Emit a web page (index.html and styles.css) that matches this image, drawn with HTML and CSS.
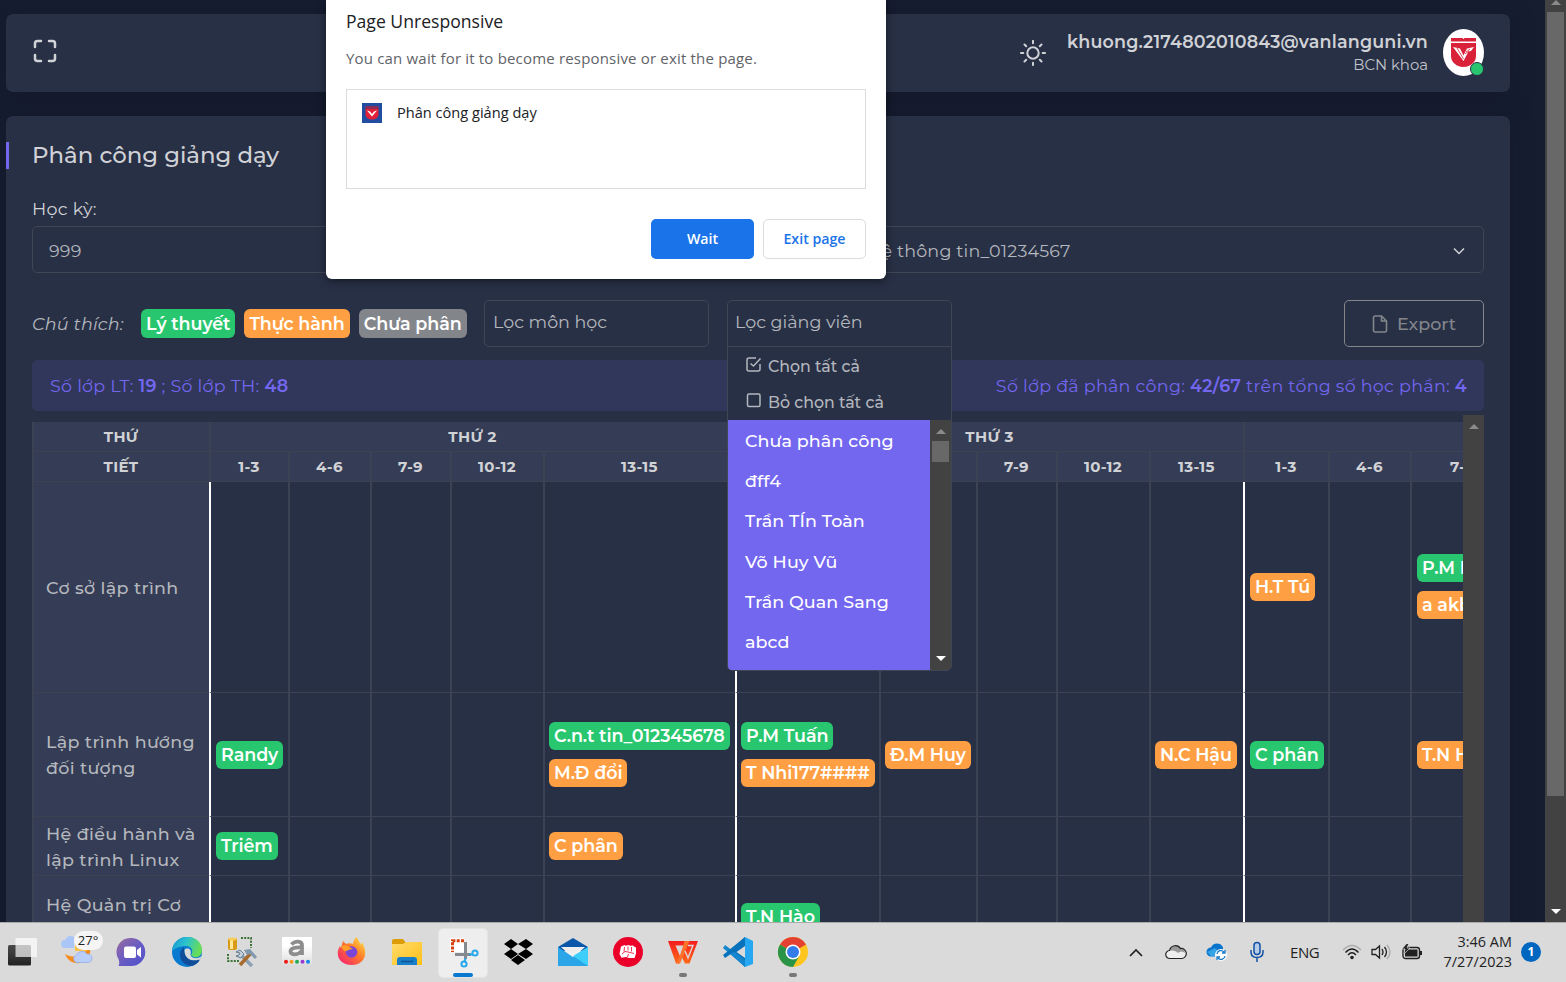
FILE: index.html
```html
<!DOCTYPE html>
<html lang="vi">
<head>
<meta charset="utf-8">
<title>Phân công giảng dạy</title>
<link rel="stylesheet" href="styles.css">
</head>
<body>
<div class="screen">
  <div class="viewport">
    <main class="page">
      <header class="navbar">
        <svg class="i-full" width="24" height="24" viewBox="0 0 24 24"><path d="M8 2H4.500A2.500 2.500 0 0 0 2 4.500V8M16 2h3.500A2.500 2.500 0 0 1 22 4.500V8M8 22H4.500A2.500 2.500 0 0 1 2 19.500V16M16 22h3.500a2.500 2.500 0 0 0 2.500-2.500V16"/></svg>
        <div class="user">
          <svg class="i-sun" width="26" height="26" viewBox="0 0 26 26"><circle cx="13" cy="13" r="5.700"/><path d="M13 .9v2.400M13 22.700v2.400M.9 13h2.400M22.700 13h2.400M4.500 4.500l1.700 1.700M19.800 19.800l1.700 1.700M4.500 21.500l1.700-1.700M19.800 6.200l1.700-1.700"/></svg>
          <div class="who"><b>khuong.2174802010843@vanlanguni.vn</b><span>BCN khoa</span></div>
          <div class="avatar">
            <svg width="41" height="47" viewBox="0 0 41 47"><ellipse cx="20.500" cy="23.500" rx="20.500" ry="23.500" fill="#fff"/><path d="M8 9h11.500l1 1.200 1-1.200H33v3.500H8zM8 14h25v13c0 6-5 10.500-12.500 11C13 37.500 8 33 8 27z" fill="#d9223a"/><path d="M10 18l7 1.500 3.500 7L24 19.500l7-1.500-3 4-2.500.5L20.500 32z" fill="#fff"/><path d="M14 19l6.500 11M23 23l4-3M22 25l4-3" stroke="#d9223a" stroke-width=".8"/></svg>
            <i class="online"></i>
          </div>
        </div>
      </header>

      <section class="card">
        <h1>Phân công giảng dạy</h1>
        <label class="lbl">Học kỳ:</label>
        <div class="selects">
          <div class="select">999</div>
          <div class="select major"><span>Hệ thông tin_01234567</span><svg width="12" height="8" viewBox="0 0 12 8"><path d="M1 1.500l5 5 5-5"/></svg></div>
        </div>
        <div class="tools">
          <em>Chú thích:</em>
          <span class="badge green">Lý thuyết</span><span class="badge orange">Thực hành</span><span class="badge gray">Chưa phân</span>
          <div class="filter first">Lọc môn học</div>
          <div class="filter lecturer"><span>Lọc giảng viên</span>
            <div class="menu">
              <div class="act"><svg width="17" height="17" viewBox="0 0 17 17"><path d="M15 8v5a2 2 0 0 1-2 2H4a2 2 0 0 1-2-2V4a2 2 0 0 1 2-2h7M5.500 7.500L8.500 10l7-7.500"/></svg><span>Chọn tất cả</span></div>
              <div class="act"><svg width="17" height="17" viewBox="0 0 17 17"><rect x="2.500" y="2" width="12.500" height="12.500" rx="1.500"/></svg><span>Bỏ chọn tất cả</span></div>
              <div class="list">
                <ul><li>Chưa phân công</li><li>đff4</li><li>Trần TÍn Toàn</li><li>Võ Huy Vũ</li><li>Trần Quan Sang</li><li>abcd</li></ul>
                <div class="sbar"><i class="up"></i><i class="thumb"></i><i class="down"></i></div>
              </div>
            </div>
          </div>
          <button class="export"><svg width="16" height="18" viewBox="0 0 16 18"><path d="M9.500 1H3.200A1.700 1.700 0 0 0 1.500 2.700v12.600A1.700 1.700 0 0 0 3.200 17h9.600a1.700 1.700 0 0 0 1.700-1.700V6zM9.500 1v5h5"/></svg><span>Export</span></button>
        </div>
        <div class="alert"><span>Số lớp LT: <b>19</b> ; Số lớp TH: <b>48</b></span><span>Số lớp đã phân công: <b>42/67</b> trên tổng số học phần: <b>4</b></span></div>
        <div class="sheet">
          <div class="clip">
            <div class="grid">
              <div class="th">THỨ</div><div class="th five">THỨ 2</div><div class="th five">THỨ 3</div><div class="th three"></div>
              <div class="th">TIẾT</div><div class="th">1-3</div><div class="th">4-6</div><div class="th">7-9</div><div class="th">10-12</div><div class="th">13-15</div><div class="th">1-3</div><div class="th">4-6</div><div class="th">7-9</div><div class="th">10-12</div><div class="th">13-15</div><div class="th">1-3</div><div class="th">4-6</div><div class="th">7-9</div>

              <div class="name">Cơ sở lập trình</div><div class="day"></div><div></div><div></div><div></div><div></div><div class="day"></div><div></div><div></div><div></div><div></div><div class="day wide"><span class="badge orange">H.T Tú</span></div><div></div><div class="wide pair"><span class="badge green">P.M Hiền</span><span class="badge orange">a akb</span></div>

              <div class="name">Lập trình hướng<br>đối tượng</div><div class="day wide"><span class="badge green">Randy</span></div><div></div><div></div><div></div><div><span class="badge green">C.n.t tin_012345678</span><span class="badge orange">M.Đ đổi</span></div><div class="day"><span class="badge green">P.M Tuấn</span><span class="badge orange">T Nhi177####</span></div><div><span class="badge orange">Đ.M Huy</span></div><div></div><div></div><div><span class="badge orange">N.C Hậu</span></div><div class="day wide"><span class="badge green">C phân</span></div><div></div><div class="wide"><span class="badge orange">T.N Hà</span></div>

              <div class="name">Hệ điều hành và<br>lập trình Linux</div><div class="day wide"><span class="badge green">Triêm</span></div><div></div><div></div><div></div><div><span class="badge orange">C phân</span></div><div class="day"></div><div></div><div></div><div></div><div></div><div class="day"></div><div></div><div></div>

              <div class="name">Hệ Quản trị Cơ<br>&nbsp;</div><div class="day"></div><div></div><div></div><div></div><div></div><div class="day"><span class="badge green">T.N Hào</span></div><div></div><div></div><div></div><div></div><div class="day"></div><div></div><div></div>
            </div>
          </div>
          <div class="sbar tall"><i class="up"></i></div>
        </div>
      </section>
    </main>
    <div class="sbar main"><i class="up"></i><i class="thumb"></i><i class="down"></i></div>
  </div>

  <div class="dialog">
    <h2>Page Unresponsive</h2>
    <p>You can wait for it to become responsive or exit the page.</p>
    <div class="pages"><svg width="20" height="20" viewBox="0 0 20 20"><rect width="20" height="20" fill="#204da0"/><path d="M3.500 3h13v3h-13z" fill="#8c2d59"/><path d="M3.500 6h13v5.500c0 3-3 5-6.500 5s-6.500-2-6.500-5z" fill="#df2039"/><path d="M5 7.500l3 1 2 2.500 2-2.500 3-1-5 6z" fill="#fff"/></svg><span>Phân công giảng dạy</span></div>
    <div class="btns"><button class="wait">Wait</button><button class="exit">Exit page</button></div>
  </div>

  <footer class="taskbar">
    <div class="apps">
      <div><svg width="32" height="32" viewBox="0 0 32 32"><defs><linearGradient id="tv" x2="0" y2="1"><stop stop-color="#4a4a4a"/><stop offset="1" stop-color="#222"/></linearGradient></defs><rect x="2" y="9" width="23" height="20.500" rx="1.500" fill="url(#tv)"/><path d="M9.500 2H31v19H9.500z" fill="#fff" opacity=".68"/></svg></div>
      <div class="weather"><svg width="34" height="34" viewBox="0 0 34 34"><path d="M26 6c4 13-9 20-21 13 5 13 22 12 25-1 1-5-1-9-4-12z" fill="#f68b1f"/><path d="M15 8h12v8H15z" fill="#f8c24f"/><path d="M5 13a4 4 0 0 1 0-8 6 6 0 0 1 9-3v11z" fill="#a9c6f7"/><path d="M16 27.500a4 4 0 0 1 .5-7.500 6 6 0 0 1 10.500-1 4.300 4.300 0 1 1 1.500 8.500z" fill="#b9cef8" stroke="#8fabe9" stroke-width=".7"/></svg><span>27°</span></div>
      <div><svg width="32" height="32" viewBox="0 0 32 32"><defs><linearGradient id="ch" x2="1" y2="1"><stop stop-color="#9a6a9f"/><stop offset=".5" stop-color="#6a5cc2"/><stop offset="1" stop-color="#4d50cd"/></linearGradient></defs><path d="M16 2a14 14 0 1 1-1.500 28H2.500c1-2 1-4 0-7A14 14 0 0 1 16 2z" fill="url(#ch)"/><rect x="8" y="10.500" width="12" height="11.500" rx="2" fill="#fff"/><path d="M21 14l4-3v10.500l-4-3z" fill="#fff"/></svg></div>
      <div><svg width="32" height="32" viewBox="0 0 32 32"><defs><linearGradient id="ed" x2="1" y2=".3"><stop stop-color="#1593d5"/><stop offset=".5" stop-color="#2cc2ce"/><stop offset="1" stop-color="#68dd58"/></linearGradient></defs><circle cx="16" cy="16" r="15" fill="#087bd0"/><path d="M1 15C2-4 31-3 31 14c0 8-8 9-11 5 3-5 0-9-5-9-7 0-12 3-14 5z" fill="url(#ed)"/><path d="M13 11c-7 5-5 18 8 19 3-1 6-3 8-6-6 4-16 0-16-13z" fill="#124d99"/><path d="M13.500 14c2-3 8-1 6 4 0 4 6 6 11 2l-1.500 4c-7 3-16-1-15.500-10z" fill="#dadada"/><path d="M13.300 16c0 7 7 10 15.200 7.500-1 2-2 3-3.500 4-7 1-13-4-11.700-11.500z" fill="#124d99"/></svg></div>
      <div><svg width="32" height="32" viewBox="0 0 32 32"><path d="M15 2h10v10M2 18v7h11" fill="none" stroke="#3d7339" stroke-width="2" stroke-dasharray="2 1.200"/><rect x="2" y="2" width="9" height="12" rx="2" fill="#d79b18"/><path d="M4 3h3v10H4z" fill="#ffe894"/><ellipse cx="6.500" cy="3" rx="4" ry="1.500" fill="#f7cf54"/><path d="M14 18l12 12" stroke="#8c9fb3" stroke-width="3.500"/><path d="M25 17L14 29" stroke="#a76b2d" stroke-width="3.500"/><path d="M18 14l6-1 7 8-2 2-5-5-3 1z" fill="#8199ae"/><path d="M10 16l4-2 4 4-3 4-5-2 3-1 1-2z" fill="#c5d2df" stroke="#647b8e"/></svg></div>
      <div><svg width="32" height="32" viewBox="0 0 32 32"><defs><linearGradient id="am" x2="0" y2="1"><stop offset=".3" stop-color="#fff"/><stop offset="1" stop-color="#ddd"/></linearGradient></defs><path d="M1 1h30v28H1z" fill="url(#am)"/><path d="M10.500 8.500C14 4.500 21 4.500 21 9.500V19m0-7.500c-8-.5-11.500 1-11.500 4 0 4 8 4 11.500-1" fill="none" stroke="#8d8d8d" stroke-width="3.800"/><circle cx="5" cy="25.700" r="2" fill="#ef1616"/><circle cx="10.500" cy="25.700" r="2" fill="#f39b1f"/><circle cx="16" cy="25.700" r="2" fill="#24a956"/><circle cx="21.500" cy="25.700" r="2" fill="#9839d1"/><circle cx="27" cy="25.700" r="2" fill="#1287e5"/></svg></div>
      <div><svg width="32" height="32" viewBox="0 0 32 32"><defs><linearGradient id="fx" x1="1" x2="0" y2="1"><stop stop-color="#fff04a"/><stop offset=".45" stop-color="#ff7a28"/><stop offset="1" stop-color="#f4157c"/></linearGradient></defs><path d="M7 5l3 3c2-1 5-1 7 0 0-3 2-6 4-7 1 4 3 5 4 8l1-3c8 14 0 23-10 23C2 29-1 17 4 10l1 2z" fill="url(#fx)"/><circle cx="15.500" cy="16" r="5.800" fill="#7b45d8"/><path d="M5 10c5-2 8 1 12 3-4 0-6 3-9 2z" fill="#ff9d26"/></svg></div>
      <div><svg width="32" height="32" viewBox="0 0 32 32"><defs><linearGradient id="fo" x2="1" y2="1"><stop stop-color="#ffdc6c"/><stop offset="1" stop-color="#ffbf18"/></linearGradient></defs><path d="M1 5q0-2 2-2h9l3 4v4H1z" fill="#dc9c05"/><path d="M1 8h11l3-2h16v23H1z" fill="url(#fo)"/><path d="M6 29v-5a3 3 0 0 1 3-3h14a3 3 0 0 1 3 3v5z" fill="#177fc9"/><path d="M10 25.500h12" stroke="#105393" stroke-width="1.500"/></svg></div>
      <div class="active"><svg width="32" height="32" viewBox="0 0 32 32"><path d="M3 2h14v14H3z" fill="#fff"/><path d="M17 4.800H5.500V16" fill="none" stroke="#d4420e" stroke-width="3" stroke-dasharray="3 1.300"/><path d="M18.500 6v17M8 18.500h16" stroke="#858a90" stroke-width="3"/><circle cx="28" cy="17" r="2.600" fill="none" stroke="#27a9eb" stroke-width="2"/><circle cx="17" cy="28" r="2.600" fill="none" stroke="#27a9eb" stroke-width="2"/><path d="M22 18.500h4M18.500 22l-1 4" stroke="#27a9eb" stroke-width="2"/></svg><i></i></div>
      <div><svg width="32" height="32" viewBox="0 0 32 32"><path d="M9 3l7 5-7 5-7-5zM24 3l7 5-7 5-8-5zM9 13l7 5-7 5-7-5zM24 13l7 5-7 5-8-5zM16 19l7 5-7 5-7-5z"/></svg></div>
      <div><svg width="32" height="32" viewBox="0 0 32 32"><path d="M1 11L16 2l15 9v4H1z" fill="#0b57aa"/><path d="M4 11h24L16 22z" fill="#f4f4f4"/><path d="M1 11l15 10 15-10v19H1z" fill="#2aa6e8"/><path d="M31 11v19L16 20z" fill="#3dcefa"/><path d="M5 11h22l-11 9z" fill="#eee"/></svg></div>
      <div><svg width="32" height="32" viewBox="0 0 32 32"><circle cx="16" cy="16" r="15" fill="#eb0029"/><path d="M9 10.500l3.500-1.500 1 .7L17 9l1 .8 3-.3 1 1 2 1v6l-1.500 4.500H17l-3-1-4.500.8L7.500 18z" fill="#fff"/><path d="M12.500 11l-.5 4.500M16 10.500v4M19.500 11v4.500M10 18l3-2.500 3 .5 6 1.500M16.500 18l-1 3" stroke="#eb0029" stroke-width=".8" fill="none"/></svg></div>
      <div class="open"><svg width="32" height="32" viewBox="0 0 32 32"><defs><linearGradient id="wp" x2="0" y2="1"><stop stop-color="#f51d20"/><stop offset="1" stop-color="#ff6a18"/></linearGradient></defs><path d="M1 5h18v4.500H8.500L13 20l5.500-15H31l-8.500 22.500h-4.500l-3.500-7-2.500 7H9z" fill="url(#wp)"/><path d="M17.500 5h5L13 27.500H9l4-7.500z" fill="#ff722c"/><path d="M18 15l3 7 5-12.500h-5" fill="none" stroke="#dadada" stroke-width="1.400"/></svg><i></i></div>
      <div><svg width="32" height="32" viewBox="0 0 32 32"><path d="M23 1l8 4v23l-8 3z" fill="#25a8f1"/><path d="M23 1L8 16l15 15V22L14.500 16 23 10z" fill="#0871b9"/><path d="M3 9l20 15v7L1 12z" fill="#1687ce"/><path d="M3 22L23 8V1L1 19z" fill="#0873bc"/></svg></div>
      <div class="open"><svg width="32" height="32" viewBox="0 0 32 32"><circle cx="16" cy="16" r="15" fill="#ffc51f"/><path d="M16 16L3 8.500a15 15 0 0 1 26 0z" fill="#e54133"/><path d="M16 16L3 8.500A15 15 0 0 0 16 31l6.500-11.500z" fill="#299447"/><circle cx="16" cy="16" r="7.500" fill="#fff"/><circle cx="16" cy="16" r="6" fill="#337ce9"/></svg><i></i></div>
    </div>
    <div class="tray">
      <svg class="up-i" width="14" height="9" viewBox="0 0 14 9"><path d="M1 8l6-6 6 6" fill="none" stroke="#222" stroke-width="1.700"/></svg>
      <svg class="cloud" width="22" height="16" viewBox="0 0 22 16"><path d="M5 14.500a4 4 0 0 1-.5-8A6 6 0 0 1 15.500 4.500a5 5 0 0 1 1.500 10z" fill="#eee"/><path d="M4 7C6 1 14 0 16 5c2 0 4 1.500 4 4-3-2-5-2-7 0-3-2.500-6-3-9-2z" fill="#999"/><path d="M5 14.500a4 4 0 0 1-.5-8A6 6 0 0 1 15.500 4.500a5 5 0 0 1 1.500 10z" fill="none" stroke="#222" stroke-width="1.200"/></svg>
      <svg class="one" width="22" height="20" viewBox="0 0 22 20"><path d="M5 14.500A4.500 4.500 0 0 1 5 5.500a6.500 6.500 0 0 1 12 0v9z" fill="#0874cb"/><path d="M1 10L9 6l9 8H5z" fill="#35a4e7"/><circle cx="15" cy="13" r="6" fill="#fff"/><path d="M11 12a4 4 0 0 1 7-2M19 8v3h-3M19 14a4 4 0 0 1-7 2M11 18v-3h3" fill="none" stroke="#1478c9" stroke-width="1.300"/></svg>
      <svg class="mic" width="14" height="22" viewBox="0 0 14 22"><rect x="4" y="1.500" width="6" height="12" rx="3" fill="#b6cce9"/><g fill="none" stroke="#1451a5" stroke-width="1.500"><rect x="4" y="1.500" width="6" height="12" rx="3"/><path d="M1 9v2q0 5.500 6 5.500t6-5.500V9M7 16.500V21"/></g></svg>
      <span class="eng">ENG</span>
      <svg class="wifi" width="20" height="16" viewBox="0 0 20 16"><g fill="none" stroke-width="1.400"><path d="M1 6q9-9 18 0" stroke="#aaa"/><path d="M3.500 8.500q6.500-7 13 0M6 11q4-4.500 8 0" stroke="#222"/></g><circle cx="10" cy="13.500" r="1.800" fill="#222"/></svg>
      <svg class="vol" width="20" height="16" viewBox="0 0 20 16"><g fill="none" stroke="#222" stroke-width="1.300"><path d="M1 5.500h3.500L8.500 2v12l-4-3.500H1zM11 5q2 3 0 6M13.500 3q4 5 0 10"/><path d="M16 1q6 7 0 14" stroke="#aaa"/></g></svg>
      <svg class="bat" width="20" height="17" viewBox="0 0 20 17"><rect x="1" y="3.500" width="16.500" height="11" rx="2.500" fill="none" stroke="#222" stroke-width="1.400"/><path d="M3 5.500h12.500v7H3zM18 7h2v4h-2z" fill="#222"/><path d="M5-1L0 5h3l-1 5 6-6H5l2-5z" fill="#222" stroke="#dadada" stroke-width=".7"/></svg>
      <div class="clock"><span>3:46 AM</span><span>7/27/2023</span></div>
      <b class="notice">1</b>
    </div>
  </footer>
</div>
</body>
</html>
```
FILE: styles.css
```css
*{box-sizing:border-box}
body{margin:0;overflow:hidden;background:#161d31;color:#b4b7bd;font:500 17.5px Montserrat,Inter,"Noto Sans",sans-serif}
svg{display:block;flex:none}
button{font:inherit;margin:0;padding:0;background:none}
.screen{position:relative;width:1566px;height:982px;display:flex;flex-direction:column;overflow:hidden}
.viewport{height:922px;display:flex;overflow:hidden}
.page{width:1545px;padding:14px 35px 0 6px}
.navbar{height:78px;border-radius:7px;background:#283046;display:flex;justify-content:space-between;padding:15px 26px 0 27px;box-shadow:0 4px 24px rgba(20,20,30,.35)}
.navbar .i-full{margin-top:10px;fill:none;stroke:#d0d2d6;stroke-width:2.5;stroke-linecap:round}
.user{display:flex}
.i-sun{margin:11px 21px 0 0;fill:none;stroke:#d0d2d6;stroke-width:2;stroke-linecap:round}
.who{display:flex;flex-direction:column;align-items:flex-end;margin-right:15px;color:#d0d2d6;white-space:nowrap}
.who b{font-weight:600;font-size:17.5px;line-height:25px;letter-spacing:.17px}
.who span{font-weight:400;font-size:14.9px;line-height:22px;color:#c0c3c8}
.avatar{position:relative;width:41px;height:47px}
.online{position:absolute;right:0;bottom:0;width:14px;height:14px;border-radius:50%;background:#28c76f;border:1px solid #283046}
.card{margin-top:24px;height:900px;background:#283046;border-radius:7px;padding:26px 26px 0;box-shadow:0 4px 24px rgba(20,20,30,.35)}
h1{margin:0 0 0 -26px;padding-left:23px;border-left:3px solid #7367f0;height:27px;font-size:22.85px;line-height:27px;font-weight:500;color:#d0d2d6}
.lbl{display:block;margin-top:27px;height:26px;font-size:17.5px;letter-spacing:.25px;line-height:26px;font-weight:400;color:#d0d2d6}
.selects{display:grid;grid-template-columns:1fr 1fr;gap:26px;margin-top:4px}
.select{height:47px;border:1px solid #404656;border-radius:5px;padding:2px 16px 0;display:flex;align-items:center;justify-content:space-between;font-size:17.5px;letter-spacing:.18px;font-weight:400;line-height:26px}
.select.major{padding-left:95px;padding-right:18px}
.select svg{fill:none;stroke:#d0d2d6;stroke-width:1.5}
.tools{display:flex;margin-top:27px;height:47px;align-items:center;position:relative;z-index:2}
.tools em{font-weight:400;letter-spacing:.2px;width:109px}
.badge{display:block;height:28px;line-height:28px;border-radius:6px;padding:0 5px;color:#fff;font-weight:600;font-size:17.5px;letter-spacing:-.06px;white-space:nowrap;width:max-content}
.tools .badge{height:29px;line-height:30px;margin-right:9px}
.green{background:#28c76f}.orange{background:#ff9f43}.gray{background:#82868b}
.filter{width:225px;height:47px;border:1px solid #404656;border-radius:5px;padding:0 8px;line-height:42px;font-weight:400}
.filter.first{margin-left:auto;margin-right:18px}
.lecturer{position:relative;border-radius:5px 5px 0 0;margin-right:392px;padding-left:7px}
.menu{position:absolute;left:-1px;top:45px;width:225px;background:#283046;border:1px solid #404656;border-radius:0 0 5px 5px;overflow:hidden;font-weight:500;font-size:15.8px}
.act{height:36px;display:flex;align-items:center;gap:6px;padding-left:17px;line-height:36px}
.act:first-child{height:37px;padding-top:3px}
.act+.act{padding-top:2px}
.act svg{margin-top:-5px;fill:none;stroke:#b4b7bd;stroke-width:1.5}
.list{display:flex;height:250px;background:#424242}
.list ul{margin:0;padding:1px 0 0;list-style:none;width:202px;background:#7367f0;color:#fff;font-size:17.5px}
.list li{height:40.2px;line-height:40px;padding-left:17px;white-space:nowrap;letter-spacing:.1px}
.sbar{width:21px;background:#424242;display:flex;flex-direction:column;align-items:center;flex:none}
.sbar i{display:block;flex:none}
.up{border:5px solid transparent;border-top:0;border-bottom-color:#8b8b8b}
.down{border:5px solid transparent;border-bottom:0;border-top-color:#fff;margin-top:auto}
.thumb{background:#686868;width:17px}
.list .up{margin-top:9px}.list .thumb{height:21px;margin-top:7px}.list .down{margin-bottom:9px}
.main .thumb{height:784px;margin-top:7px}.main .down{margin-bottom:8px}
.tall .up{margin-top:9px}
.export{flex:none;width:140px;height:47px;border:1px solid #82868b;border-radius:5px;color:#82868b;display:flex;align-items:center;justify-content:center;gap:9px}
.export svg{fill:none;stroke:#82868b;stroke-width:1.6}
.alert{margin-top:13px;height:51px;border-radius:5px;background:#31365b;color:#7367f0;display:flex;justify-content:space-between;padding:0 17px 0 18px;font-size:17.5px;letter-spacing:.27px;line-height:52px;font-weight:400;white-space:nowrap}
.alert b{font-weight:600}
.sheet{display:flex;margin-top:4px;height:507px}
.clip{width:1431px;padding-top:7px;overflow:hidden}
.grid{display:grid;width:1482px;grid-template-columns:177px 79px 82px 80px 93px 192px 144px 97px 80px 93px 94px 85px 82px 104px;grid-template-rows:30px 30px 211px 124px 59px 83px}
.grid>div{border-left:2px solid #3b4253;border-bottom:1px solid #3b4253;display:flex;flex-direction:column;justify-content:center;gap:9px;padding-left:4px;min-width:0}
.grid>.day{border-left-color:#fff}
.grid>.wide{padding-left:5px}
.grid>.pair{padding-bottom:1px}
.grid>.th{background:#353c55;text-align:center;padding:0 1px 0 0;font-weight:700;font-size:15px;line-height:29px;color:#d0d2d6;letter-spacing:.35px}
.grid>.name{background:#353c55;padding-left:12px;padding-top:1px;letter-spacing:.34px;line-height:25.7px;white-space:nowrap}
.grid>.five{grid-column:span 5}.grid>.three{grid-column:span 3}
.dialog{position:absolute;left:326px;top:0;width:560px;height:279px;background:#fff;border-radius:0 0 6px 6px;padding:9px 20px 0;z-index:5;box-shadow:0 2px 8px rgba(0,0,0,.5);font-family:"Segoe UI","Open Sans",sans-serif;color:#202124}
.dialog h2{margin:0;font-size:17.6px;line-height:24px;font-weight:400}
.dialog p{margin:14px 0 0;font-size:15px;letter-spacing:.18px;line-height:22px;font-weight:400;color:#5f6368}
.pages{margin-top:20px;height:100px;border:1px solid #dadce0;display:flex;gap:15px;padding:13px 15px;font-size:14.6px;font-weight:400;line-height:20px}
.pages span{margin-top:-1px}
.btns{display:flex;justify-content:flex-end;gap:9px;margin-top:30px}
.btns button{width:103px;height:40px;border-radius:5px;font-size:14.2px;font-weight:600;padding-bottom:2px}
.wait{border:0;background:#1a73e8;color:#fff}.exit{border:1px solid #dadce0;color:#1a73e8}
.taskbar{height:60px;background:#dadada;border-top:1px solid #aaa;display:flex;justify-content:space-between;font-family:"Segoe UI","Open Sans",sans-serif;color:#222;font-weight:400}
.apps{display:flex;margin-left:-5.5px;height:58px}
.apps div{position:relative;width:55.07px;display:flex;align-items:center;justify-content:center}
.weather span{position:absolute;left:24px;top:8px;width:29px;height:19px;border-radius:10px;background:#f5f5f5;text-align:center;font-size:13px;line-height:19px}
.apps .active::before{content:"";position:absolute;left:3px;top:5px;width:48px;height:48px;border-radius:5px;background:#eee;border:1px solid #e4e4e4}
.active svg{position:relative}
.apps i{position:absolute;bottom:4px;left:23.5px;width:8px;height:4px;border-radius:2px;background:#777}
.apps .active i{left:17.5px;width:20px;background:#0878d1}
.tray{display:flex;align-items:center;padding-right:25px;height:58px}
.cloud{margin-left:22px}.one{margin-left:19px}.mic{margin-left:22px}
.eng{margin-left:26px;font-size:15px;width:30px;letter-spacing:-.4px}.wifi{margin-left:22px}.vol{margin-left:9px}.bat{margin-left:11px}
.clock{margin-left:20px;width:70px;display:flex;flex-direction:column;align-items:flex-end;font-size:14.4px;line-height:20px;letter-spacing:.05px;white-space:nowrap}
.notice{width:20px;height:20px;border-radius:50%;margin-left:9px;background:#0067c0;color:#fff;font-size:12px;line-height:20px;text-align:center}
```
